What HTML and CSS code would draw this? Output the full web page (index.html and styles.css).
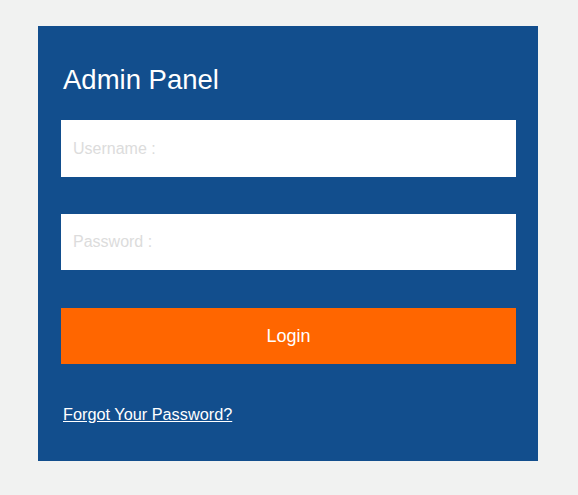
FILE: index.html
```html
<!DOCTYPE html>
<html>
<head>
<meta charset="utf-8">
<title>Admin Panel</title>
<link rel="stylesheet" href="styles.css">
</head>
<body>
<div class="page">
  <form class="panel">
    <h1 class="title">Admin Panel</h1>
    <input class="field" type="text" placeholder="Username :">
    <input class="field" type="password" placeholder="Password :">
    <button class="btn" type="button">Login</button>
    <a class="forgot" href="#">Forgot Your Password?</a>
  </form>
</div>
</body>
</html>
```
FILE: styles.css
```css
html, body {
  margin: 0;
  padding: 0;
  background: #f1f2f1;
  font-family: "Liberation Sans", Arial, sans-serif;
}
.page {
  padding: 26px 0 0 38px;
}
.panel {
  width: 500px;
  box-sizing: border-box;
  background: #124e8d;
  padding: 38px 22px 38px 23px;
  display: flex;
  flex-direction: column;
  align-items: stretch;
}
.title {
  margin: 0 0 25px 2px;
  font-size: 27.5px;
  line-height: 31px;
  font-weight: normal;
  color: #ffffff;
}
.field {
  height: 57px;
  box-sizing: border-box;
  border: none;
  outline: none;
  background: #ffffff;
  padding: 0 12px;
  margin: 0 0 37px 0;
  font-family: "Liberation Sans", Arial, sans-serif;
  font-size: 16px;
  color: #333;
}
.field + .field {
  height: 56px;
  margin-bottom: 38px;
}
.field::placeholder {
  color: #dcdcdc;
}
.btn {
  height: 56px;
  border: none;
  background: #ff6600;
  color: #ffffff;
  font-family: "Liberation Sans", Arial, sans-serif;
  font-size: 18px;
  padding: 0;
  margin: 0 0 41px 0;
  cursor: pointer;
}
.forgot {
  align-self: flex-start;
  margin-left: 2px;
  font-size: 16.3px;
  line-height: 18px;
  color: #ffffff;
  text-decoration: underline;
}
```
